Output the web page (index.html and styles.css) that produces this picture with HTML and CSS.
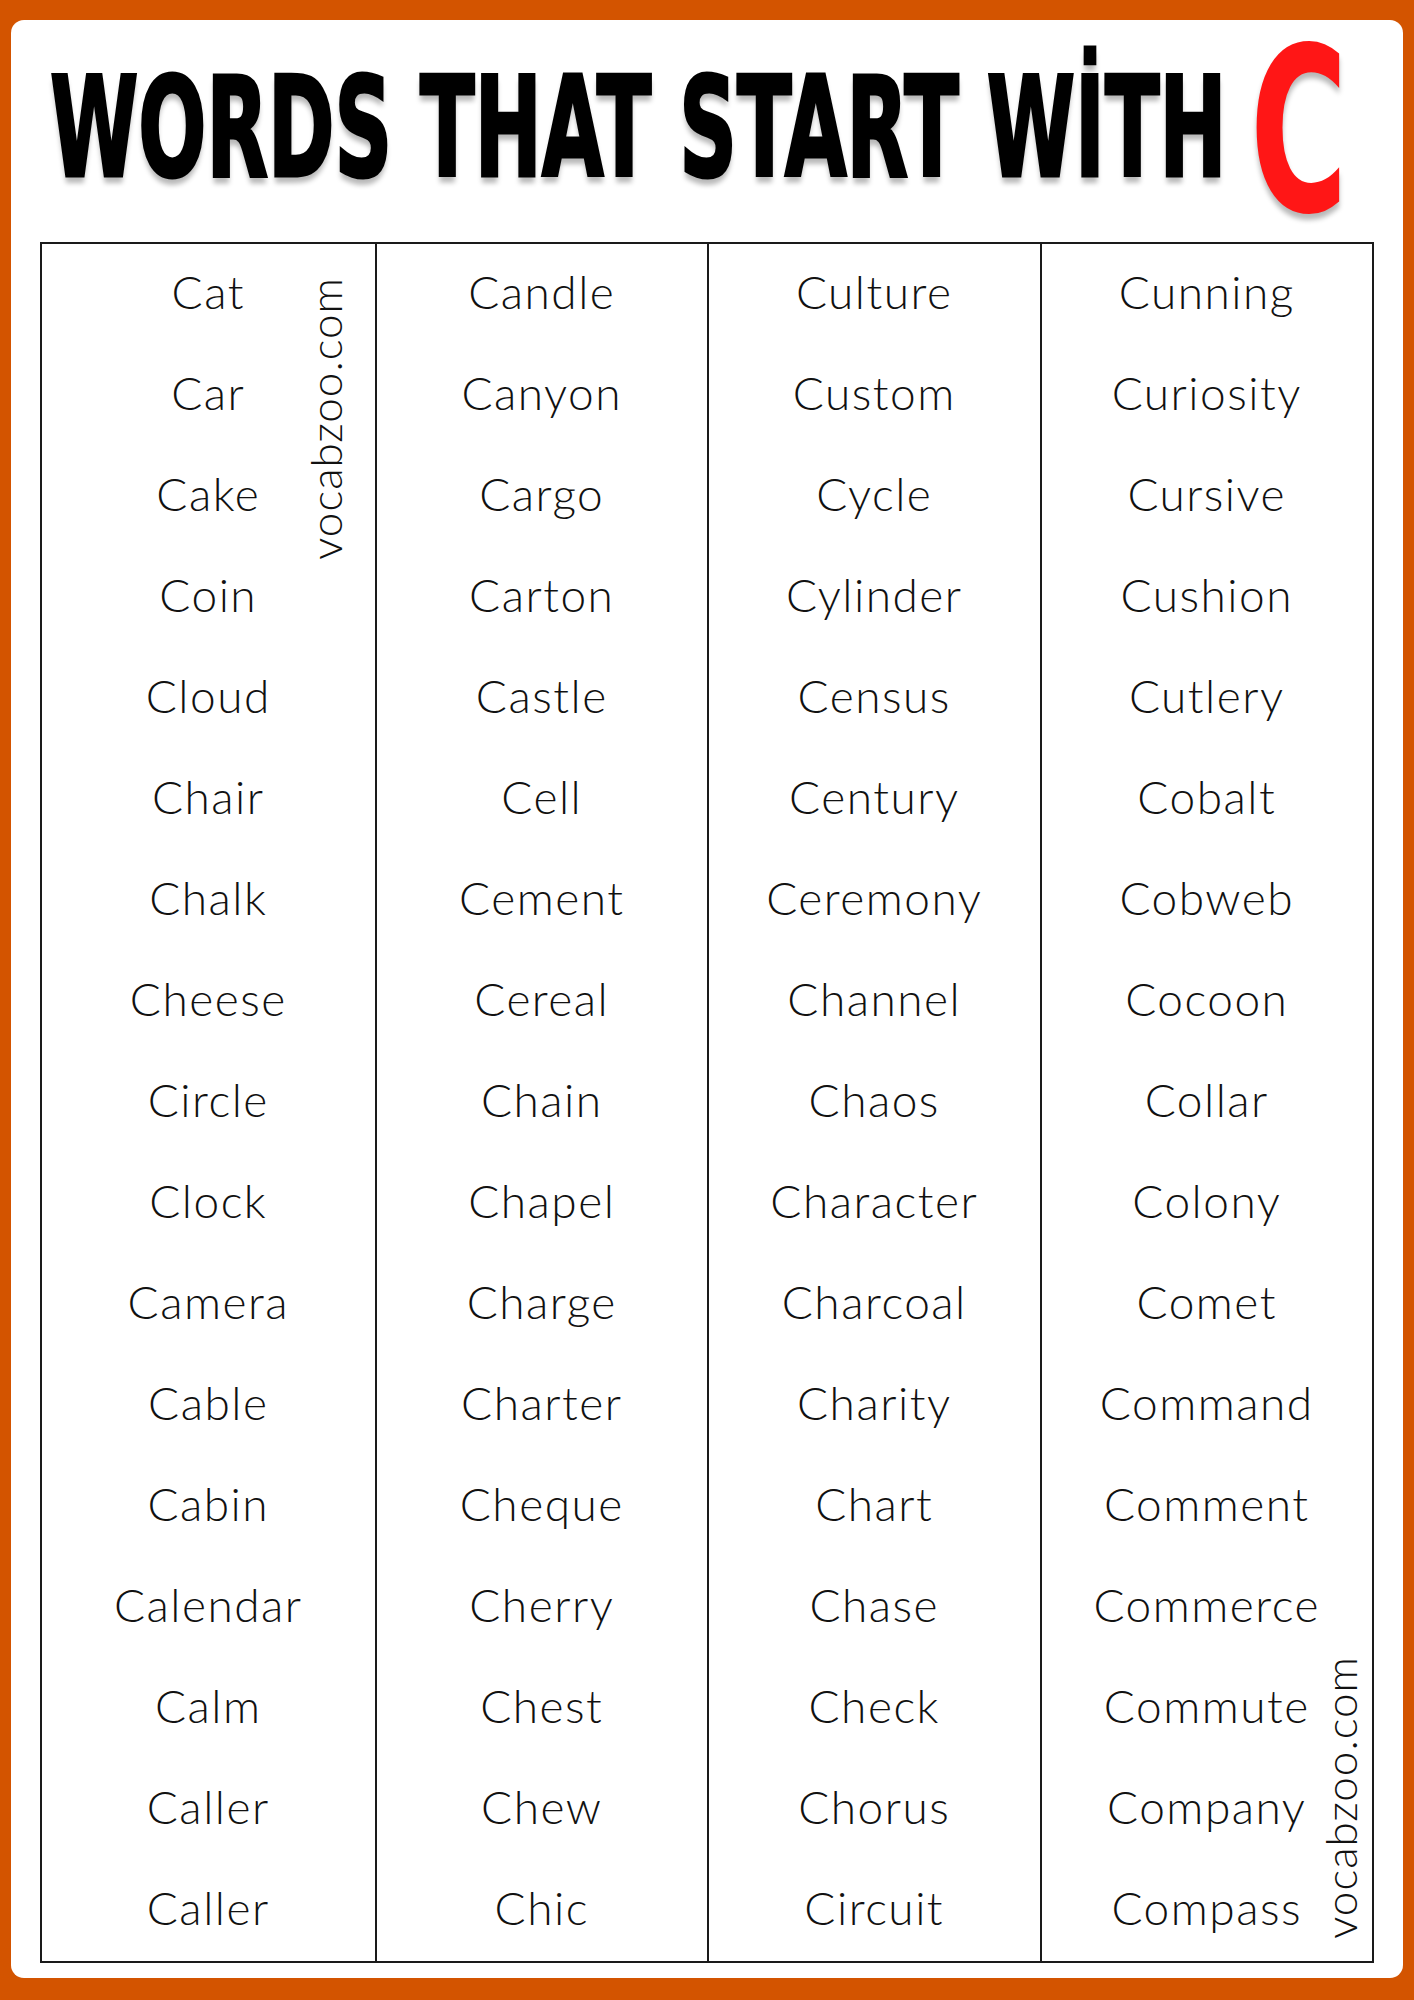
FILE: index.html
```html
<!DOCTYPE html>
<html lang="en">
<head>
<meta charset="utf-8">
<title>Words That Start With C</title>
<link rel="stylesheet" href="styles.css">
</head>
<body>
<div class="frame">
  <div class="card">
    <header class="header">
      <h1 class="title"><span class="title-words"><span class="title-words-text">WORDS THAT START WİTH</span></span><span class="title-letter"><span class="title-letter-text">C</span></span></h1>
    </header>
    <div class="table">
      <div class="col">
        <span class="mark mark-top">vocabzoo.com</span>
        <div class="cell">Cat</div><div class="cell">Car</div><div class="cell">Cake</div><div class="cell">Coin</div><div class="cell">Cloud</div><div class="cell">Chair</div><div class="cell">Chalk</div><div class="cell">Cheese</div><div class="cell">Circle</div><div class="cell">Clock</div><div class="cell">Camera</div><div class="cell">Cable</div><div class="cell">Cabin</div><div class="cell">Calendar</div><div class="cell">Calm</div><div class="cell">Caller</div><div class="cell">Caller</div>
      </div>
      <div class="col">
        <div class="cell">Candle</div><div class="cell">Canyon</div><div class="cell">Cargo</div><div class="cell">Carton</div><div class="cell">Castle</div><div class="cell">Cell</div><div class="cell">Cement</div><div class="cell">Cereal</div><div class="cell">Chain</div><div class="cell">Chapel</div><div class="cell">Charge</div><div class="cell">Charter</div><div class="cell">Cheque</div><div class="cell">Cherry</div><div class="cell">Chest</div><div class="cell">Chew</div><div class="cell">Chic</div>
      </div>
      <div class="col">
        <div class="cell">Culture</div><div class="cell">Custom</div><div class="cell">Cycle</div><div class="cell">Cylinder</div><div class="cell">Census</div><div class="cell">Century</div><div class="cell">Ceremony</div><div class="cell">Channel</div><div class="cell">Chaos</div><div class="cell">Character</div><div class="cell">Charcoal</div><div class="cell">Charity</div><div class="cell">Chart</div><div class="cell">Chase</div><div class="cell">Check</div><div class="cell">Chorus</div><div class="cell">Circuit</div>
      </div>
      <div class="col">
        <span class="mark mark-bottom">vocabzoo.com</span>
        <div class="cell">Cunning</div><div class="cell">Curiosity</div><div class="cell">Cursive</div><div class="cell">Cushion</div><div class="cell">Cutlery</div><div class="cell">Cobalt</div><div class="cell">Cobweb</div><div class="cell">Cocoon</div><div class="cell">Collar</div><div class="cell">Colony</div><div class="cell">Comet</div><div class="cell">Command</div><div class="cell">Comment</div><div class="cell">Commerce</div><div class="cell">Commute</div><div class="cell">Company</div><div class="cell">Compass</div>
      </div>
    </div>
  </div>
</div>
</body>
</html>
```
FILE: styles.css
```css
* { box-sizing: border-box; }
html, body { margin: 0; padding: 0; }
body {
  width: 1414px;
  height: 2000px;
  overflow: hidden;
  background: #d35400;
  font-family: "Lato", "Noto Sans", sans-serif;
  color: #111;
}
.frame {
  height: 2000px;
  padding: 20px 11px 22px 11px;
  display: flex;
}
.card {
  flex: 1;
  min-width: 0;
  background: #fff;
  border-radius: 13px;
  padding: 0 29px 15px 29px;
  display: flex;
  flex-direction: column;
}
.header {
  height: 222px;
  flex: none;
}
.title {
  margin: 0;
  display: flex;
  align-items: flex-start;
  font-family: "DejaVu Sans Condensed", "DejaVu Sans", sans-serif;
  font-weight: 700;
  white-space: nowrap;
  color: #000;
}
.title-words {
  display: block;
  flex: none;
  width: 1175px;
  margin-left: 10px;
  margin-top: 56px;
}
.title-words-text {
  display: inline-block;
  font-size: 89px;
  line-height: 0.75;
  transform: scaleY(1.57);
  transform-origin: top left;
  -webkit-text-stroke: 2px #000;
  text-shadow: 0 4px 4px rgba(0,0,0,0.28);
}
.title-letter {
  display: block;
  flex: none;
  width: 120px;
  height: 190px;
  margin-left: 25px;
  margin-top: 27px;
}
.title-letter-text {
  display: inline-block;
  font-size: 150px;
  line-height: 0.75;
  color: #ff1616;
  transform: scale(0.985, 1.52);
  transform-origin: top left;
  text-shadow: 0 4px 4px rgba(0,0,0,0.28);
}
.table {
  flex: 1;
  display: grid;
  grid-template-columns: repeat(4, minmax(0, 1fr));
  border: 2px solid #1a1a1a;
}
.col {
  position: relative;
  display: grid;
  grid-template-rows: repeat(17, 1fr);
  border-left: 2px solid #1a1a1a;
}
.col:first-child { border-left: none; }
.cell {
  display: flex;
  align-items: center;
  justify-content: center;
  padding-bottom: 6px;
  font-size: 46px;
  font-weight: 300;
  letter-spacing: 1.5px;
  line-height: 1;
}
.mark {
  position: absolute;
  writing-mode: vertical-rl;
  transform: rotate(180deg);
  font-size: 44px;
  font-weight: 300;
  letter-spacing: 1px;
  line-height: 1;
}
.mark-top { top: 33px; right: 28px; }
.mark-bottom { bottom: 22px; right: 10px; }
```
